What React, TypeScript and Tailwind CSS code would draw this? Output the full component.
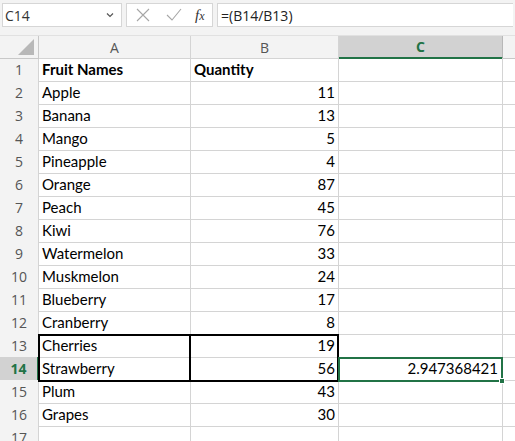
import React from "react";

const rows: [string, string][] = [
  ["Fruit Names", "Quantity"],
  ["Apple", "11"],
  ["Banana", "13"],
  ["Mango", "5"],
  ["Pineapple", "4"],
  ["Orange", "87"],
  ["Peach", "45"],
  ["Kiwi", "76"],
  ["Watermelon", "33"],
  ["Muskmelon", "24"],
  ["Blueberry", "17"],
  ["Cranberry", "8"],
  ["Cherries", "19"],
  ["Strawberry", "56"],
  ["Plum", "43"],
  ["Grapes", "30"],
  ["", ""],
];

const cols = "grid-cols-[39px_152px_148px_164px_1fr]";

export default function App(): React.ReactElement {
  return (
    <div className="h-[441px] w-[515px] overflow-hidden bg-white font-['Lato',sans-serif]">
      {/* formula bar */}
      <div className="flex h-[36px] items-start gap-[4px] border-b border-[#e1e1e1] bg-[#f3f3f3] px-[2px] pt-[3px]">
        <div className="flex h-[24px] w-[120px] items-center justify-between border border-[#d6d6d6] bg-white pl-[2px] pr-[7px] text-[14px] text-[#333] font-['Open_Sans',sans-serif]">
          <span>C14</span>
          <svg width="8" height="6" viewBox="0 0 8 6" fill="none" stroke="#555" strokeWidth="1.2">
            <path d="M1 1.5l3 3 3-3" />
          </svg>
        </div>
        <div className="flex h-[24px] w-[87px] items-center border border-[#d6d6d6] bg-white">
          <svg className="ml-[9px]" width="14" height="14" viewBox="0 0 14 14" stroke="#a6a6a6" strokeWidth="1.1" fill="none">
            <path d="M1 1l12 12M13 1L1 13" />
          </svg>
          <svg className="ml-[16px]" width="16" height="14" viewBox="0 0 16 14" stroke="#a6a6a6" strokeWidth="1.1" fill="none">
            <path d="M1 7l5 5L15 1" />
          </svg>
          <span className="ml-[13px] font-['Liberation_Serif',serif] text-[15px] italic text-[#333]">
            f<span className="text-[12px]">x</span>
          </span>
        </div>
        <div className="flex h-[24px] flex-1 items-center border border-r-0 border-[#d6d6d6] bg-white pl-[3px] text-[14px] text-[#222] font-['Open_Sans',sans-serif]">
          =(B14/B13)
        </div>
      </div>

      {/* grid */}
      <div className="relative">
        <div className={`grid ${cols} h-[22px] bg-[#f3f3f3] text-[14px] text-[#555] font-['Open_Sans',sans-serif]`}>
          <div className="relative border-r border-b border-[#c8c8c8]">
            <div className="absolute bottom-[3px] right-[4px] h-0 w-0 border-b-[16px] border-l-[16px] border-b-[#b8b8b8] border-l-transparent" />
          </div>
          <div className="flex items-center justify-center border-r border-b border-[#d4d4d4]">A</div>
          <div className="flex items-center justify-center border-r border-b border-[#d4d4d4]">B</div>
          <div className="flex items-center justify-center border-r border-b-2 border-r-[#b8b8b8] border-b-[#217346] bg-[#d2d2d2] font-bold text-[#217346]">
            C
          </div>
          <div className="border-b border-[#c8c8c8]" />
        </div>

        {rows.map(([a, b], i) => {
          const n = i + 1;
          const sel = n === 14;
          return (
            <div key={n} className={`grid ${cols} h-[23px] text-[15px] text-black`}>
              <div
                className={
                  sel
                    ? "flex items-center justify-center border-b border-r-2 border-b-[#c8c8c8] border-r-[#217346] bg-[#d2d2d2] text-[14px] font-bold text-[#217346] font-['Open_Sans',sans-serif]"
                    : "flex items-center justify-center border-b border-r border-[#d4d4d4] bg-[#f3f3f3] text-[14px] text-[#555] font-['Open_Sans',sans-serif]"
                }
              >
                {n}
              </div>
              <div className={`flex items-center border-r border-b border-[#d4d4d4] pl-[3px] ${n === 1 ? "font-bold" : ""}`}>
                {a}
              </div>
              <div
                className={`flex items-center border-r border-b border-[#d4d4d4] px-[3px] ${
                  n === 1 ? "justify-start font-bold" : "justify-end"
                }`}
              >
                {b}
              </div>
              <div className="flex items-center justify-end border-r border-b border-[#d4d4d4] pr-[4px]">
                {sel ? "2.947368421" : ""}
              </div>
              <div className="border-b border-[#d4d4d4]" />
            </div>
          );
        })}

        {/* A13:B14 outline */}
        <div className="pointer-events-none absolute left-[38px] top-[298px] h-[48px] w-[301px] border-2 border-black" />
        <div className="pointer-events-none absolute left-[189px] top-[298px] h-[48px] w-[2px] bg-black" />
        {/* active cell C14 */}
        <div className="pointer-events-none absolute left-[338px] top-[321px] h-[25px] w-[165px] border-2 border-[#217346]" />
        <div className="pointer-events-none absolute left-[499px] top-[342px] h-[6px] w-[6px] border border-white bg-[#217346]" />
      </div>
    </div>
  );
}
